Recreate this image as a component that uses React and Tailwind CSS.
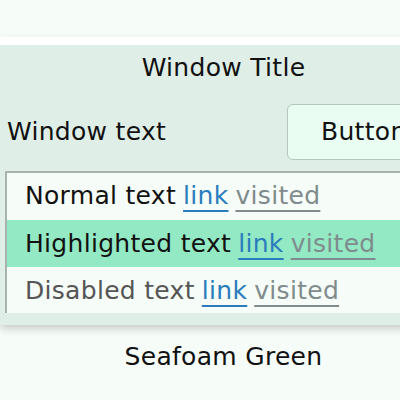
const font = { fontFamily: '"DejaVu Sans", Verdana, sans-serif' }

function Row({ label, text }) {
  return (
    <div className={`flex gap-[7px] pl-[18px] leading-[30px] ${text}`}>
      <span>{label}</span>
      <span className="text-[#2b7cbd] underline decoration-2 underline-offset-[6px]">link</span>
      <span className="text-[#7f8b8c] underline decoration-2 underline-offset-[6px]">visited</span>
    </div>
  )
}

export default function App() {
  return (
    <div
      className="h-[400px] w-[400px] overflow-hidden bg-[#f6fcf8] text-[25px] tracking-[0.3px] text-[#111]"
      style={font}
    >
      <div className="w-[447px] pt-[37px]">
        <div className="border-t-[8px] border-white bg-[#dfeee6] pb-[12px] shadow-[0_4px_8px_rgba(0,0,0,0.18)]">
          <div className="pt-[8px] text-center leading-[30px]">Window Title</div>

          <div className="mt-[21px] flex h-[56px] items-center pl-[7px]">
            <span className="w-[280px] leading-[30px]">Window text</span>
            <button className="flex h-[56px] w-[150px] items-center rounded-[6px] border border-[#b3c8bc] bg-[#eafdf3] pl-[33px] leading-[30px] tracking-[0.3px]">
              Button
            </button>
          </div>

          <div className="ml-[5px] mt-[11px] flex h-[142px] flex-col border-l-2 border-t-2 border-[#a9b3ad] bg-[#f6fcf8]">
            <div className="h-[47px] pt-[8px]">
              <Row label="Normal text" text="text-[#111]" />
            </div>
            <div className="h-[47px] bg-[#93e9c3] pt-[9px]">
              <Row label="Highlighted text" text="text-[#111]" />
            </div>
            <div className="h-[46px] pt-[9px]">
              <Row label="Disabled text" text="text-[#555]" />
            </div>
          </div>
        </div>

        <div className="mt-[17px] text-center leading-[30px]">Seafoam Green</div>
      </div>
    </div>
  )
}
